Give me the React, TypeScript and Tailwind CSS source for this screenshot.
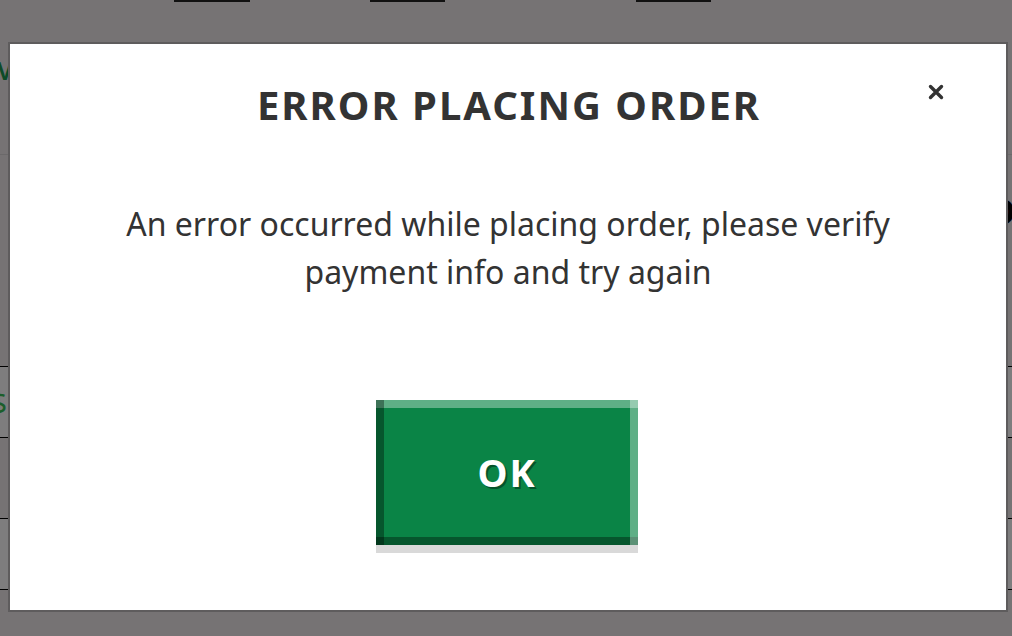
import React from 'react'

// dimmed page that sits behind the modal; only the edges peek out
const Backdrop = () => {
    return (
        <div className="flex flex-col">
            <div className="flex h-[2px]">
                <div className="ml-[174px] w-[76px] bg-[#111]" />
                <div className="ml-[120px] w-[75px] bg-[#111]" />
                <div className="ml-[191px] w-[75px] bg-[#111]" />
            </div>
            <div className="mt-[56px] -ml-[3px] text-[25px] font-semibold leading-none text-[#0d4a27]">
                VIEW CART
            </div>
            <div className="mt-[71px] border-b border-[#6b696a]" />
            <div className="mt-[39px] flex justify-end -mr-[26px] text-[36px] font-bold leading-none text-black">
                Do
            </div>
            <div className="mt-[136px] flex flex-col">
                <div className="h-[71px] border-t border-black bg-[#7e7d7e] flex items-center -ml-[10px] text-[30px] text-[#1b5e2b]">
                    $5
                </div>
                <div className="h-[81px] border-t border-black" />
                <div className="h-[71px] border-t border-black bg-[#7e7d7e]" />
                <div className="border-t border-black" />
            </div>
        </div>
    )
}

const CloseIcon = () => (
    <svg width="16" height="16" viewBox="0 0 16 16" fill="none">
        <path d="M2.5 2.5 L13.5 13.5 M13.5 2.5 L2.5 13.5" stroke="#333" strokeWidth="3.4" strokeLinecap="round" />
    </svg>
)

const App = () => {
    return (
        <div className="relative h-[636px] w-full overflow-hidden bg-[#767374] font-['Noto_Sans',sans-serif]">
            <Backdrop />

            {/* error modal */}
            <div className="absolute left-[8px] top-[42px] w-[1000px] h-[570px] border-2 border-[#5e5c5d] bg-white flex flex-col items-center">
                <button className="absolute right-[62px] top-[40px]">
                    <CloseIcon />
                </button>
                <h2 className="mt-[37px] text-[40px] leading-[48px] font-bold tracking-[0.05em] text-[#333] pl-[0.05em]">
                    ERROR PLACING ORDER
                </h2>
                <p className="mt-[71px] max-w-[800px] text-center text-[32px] leading-[48px] text-[#333]">
                    An error occurred while placing order, please verify payment info and try again
                </p>
                <button className="mt-[104px] -ml-[2px] w-[262px] h-[145px] bg-[#0a8446] text-white text-[38px] font-bold tracking-[0.05em] [text-shadow:2px_2px_0_#05532b] shadow-[inset_8px_0_0_rgba(0,0,0,0.35),inset_-8px_0_0_rgba(255,255,255,0.35),inset_0_8px_0_rgba(255,255,255,0.35),inset_0_-8px_0_rgba(0,0,0,0.35),0_8px_0_#d9d9d9]">
                    OK
                </button>
            </div>
        </div>
    )
}

export default App
